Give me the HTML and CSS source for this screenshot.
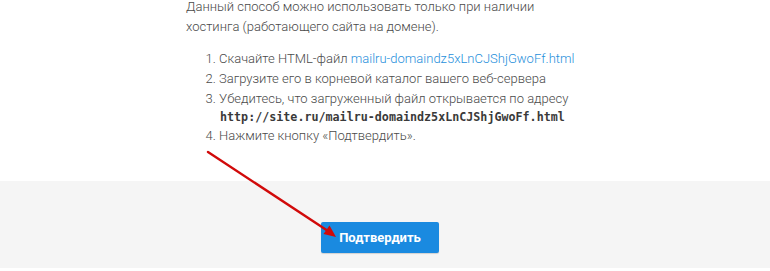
FILE: index.html
```html
<!DOCTYPE html>
<html lang="ru">
<head>
<meta charset="utf-8">
<link rel="stylesheet" href="styles.css">
</head>
<body>
<div class="page">
  <section class="content">
    <p class="intro">Данный способ можно использовать только при наличии хостинга (работающего сайта на домене).</p>
    <ol class="steps">
      <li>Скачайте HTML-файл <a class="link" href="#">mailru-domaindz5xLnCJShjGwoFf.html</a></li>
      <li>Загрузите его в корневой каталог вашего веб-сервера</li>
      <li>Убедитесь, что загруженный файл открывается по адресу <code class="url">http://site.ru/mailru-domaindz5xLnCJShjGwoFf.html</code></li>
      <li>Нажмите кнопку «Подтвердить».</li>
    </ol>
  </section>
  <footer class="actions">
    <button class="confirm">Подтвердить</button>
  </footer>
  <svg class="arrow" width="770" height="271" viewBox="0 0 770 271">
    <line x1="208" y1="152" x2="328" y2="231" stroke="#d10a0a" stroke-width="2.4" stroke-linecap="round"/>
    <polygon points="336,237 323.5,234 329.5,225.5" fill="#d10a0a"/>
  </svg>
</div>
</body>
</html>
```
FILE: styles.css
```css
html, body {
  margin: 0;
  padding: 0;
  background: #ffffff;
}
.page {
  position: relative;
  width: 770px;
  height: 271px;
  overflow: hidden;
  font-family: Roboto, "Noto Sans", sans-serif;
  font-size: 13px;
  font-weight: 300;
  color: #4a4a4a;
}
.content {
  height: 184px;
  box-sizing: border-box;
  padding-left: 186px;
  width: 600px;
  background: #fff;
}
.intro {
  margin: -3px 0 0;
  line-height: 20px;
  width: 380px;
}
.steps {
  margin: 12px 0 0;
  padding-left: 33px;
  line-height: 20px;
  white-space: nowrap;
}
.link {
  color: #1f8fdb;
  text-decoration: none;
}
.url {
  display: block;
  font-family: "DejaVu Sans Mono", "Liberation Mono", monospace;
  font-size: 11.7px;
  font-weight: 700;
  line-height: 17px;
  color: #3a3a3a;
  padding-left: 1px;
}
.actions {
  height: 87px;
  background: #f5f5f5;
  padding: 41px 0 0 321px;
  box-sizing: border-box;
}
.confirm {
  display: block;
  width: 118px;
  height: 31px;
  padding: 0;
  border: none;
  border-radius: 2px;
  background: #1a8ae0;
  color: #fff;
  font-family: Roboto, "Noto Sans", sans-serif;
  font-size: 13px;
  font-weight: 700;
  box-shadow: 0 1px 1px rgba(0,0,0,0.15);
}
.arrow {
  position: absolute;
  left: 0;
  top: 0;
  pointer-events: none;
}
```
